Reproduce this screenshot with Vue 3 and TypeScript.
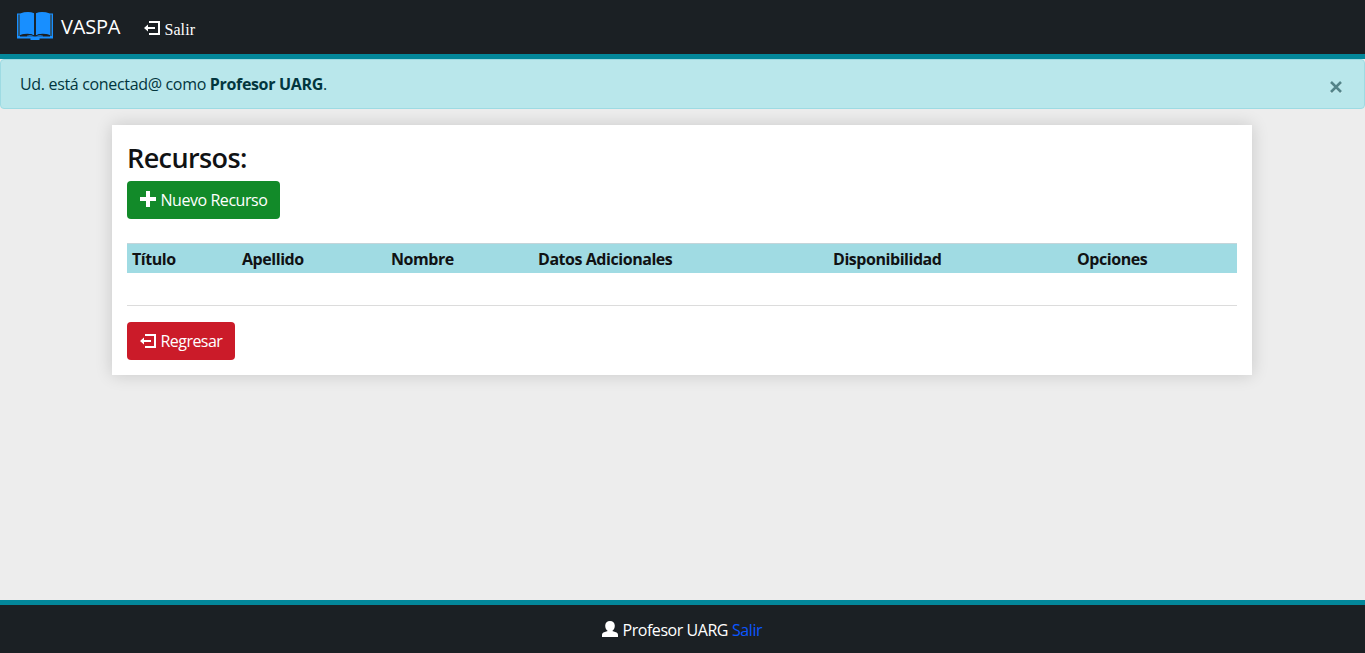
<script setup lang="ts">
interface Column {
  label: string
  width: number
}

const columns: Column[] = [
  { label: 'Título', width: 110 },
  { label: 'Apellido', width: 149 },
  { label: 'Nombre', width: 147 },
  { label: 'Datos Adicionales', width: 295 },
  { label: 'Disponibilidad', width: 244 },
  { label: 'Opciones', width: 165 },
]
const user = 'Profesor UARG'
</script>

<template>
  <div class="page">
    <nav class="navbar">
      <a class="brand">
        <svg class="book" width="36" height="28" viewBox="0 0 36 28">
          <path d="M0 1.5H3V24H33V1.5H36V26.5H22.5V28H13.5V26.5H0Z" fill="#188fff" />
          <path d="M1 2.5H3.2V24H1ZM32.8 2.5H35V24H32.8Z" fill="#28587f" />
          <path d="M3 1.5Q11-1.3 17.2 1.2V23.5Q12 20.8 3 23ZM18.8 1.2Q25-1.3 33 1.5V23Q24 20.8 18.8 23.5Z" fill="#188fff" />
          <path d="M17.3 1H18.7V24H17.3Z" fill="#1b2024" />
          <path d="M3 23.2Q12 20.2 17.3 23.6H18.7Q24 20.2 33 23.2V24.6H3Z" fill="#1b2024" />
          <path d="M10 23.7Q14 22.4 17 24.6H10ZM26 23.7Q22 22.4 19 24.6H26Z" fill="#188fff" />
        </svg>
        <span class="brand-name">VASPA</span>
      </a>
      <a class="nav-exit">
        <svg width="16" height="14" viewBox="0 0 16 14">
          <path d="M5 1H15V13H5" fill="none" stroke="#fff" stroke-width="2" />
          <path d="M0 7L4 3.5V6H11V8H4V10.5Z" fill="#fff" />
        </svg>
        <span>Salir</span>
      </a>
    </nav>

    <div class="alert">
      <span class="alert-text">Ud. está conectad@ como <strong>{{ user }}</strong>.</span>
      <button class="close" aria-label="Cerrar">
        <svg width="12" height="12" viewBox="0 0 12 12">
          <path d="M1 2L11 12M11 2L1 12" stroke="#d5f2f5" stroke-width="2.4" />
          <path d="M1 1L11 11M11 1L1 11" stroke="#538489" stroke-width="2.6" />
        </svg>
      </button>
    </div>

    <main class="card">
      <h1><span>Recursos:</span></h1>
      <button class="btn create">
        <svg width="16" height="16" viewBox="0 0 16 16">
          <path d="M6 0H10V6H16V10H10V16H6V10H0V6H6Z" fill="#fff" />
        </svg>
        <span class="create-label">Nuevo Recurso</span>
      </button>
      <table>
        <colgroup>
          <col v-for="c in columns" :key="c.label" :style="{ width: c.width + 'px' }">
        </colgroup>
        <thead>
          <tr><th v-for="c in columns" :key="c.label">{{ c.label }}</th></tr>
        </thead>
      </table>
      <hr>
      <button class="btn back">
        <svg width="16" height="14" viewBox="0 0 16 14">
          <path d="M5 1H15V13H5" fill="none" stroke="#fff" stroke-width="2" />
          <path d="M0 7L4 3.5V6H11V8H4V10.5Z" fill="#fff" />
        </svg>
        <span class="back-label">Regresar</span>
      </button>
    </main>

    <footer>
      <svg width="16" height="16" viewBox="0 0 16 16">
        <path d="M8 0C10.8 0 12.8 2 12.8 4.8C12.8 7.1 11.6 9.1 10.3 10L14.6 11.4Q16 12 16 13.8V16H0V13.8Q0 12 1.4 11.4L5.7 10C4.4 9.1 3.2 7.1 3.2 4.8C3.2 2 5.2 0 8 0Z" fill="#fff" />
      </svg>
      <span class="footer-user">{{ user }}</span>
      <a class="footer-exit">Salir</a>
    </footer>
  </div>
</template>

<style>
body {
  margin: 0;
  background: #ededed;
}
</style>

<style scoped>
* {
  box-sizing: border-box;
}
.page {
  display: flex;
  flex-direction: column;
  height: 653px;
  overflow: hidden;
  background: #ededed;
  color: #101214;
  font: 16px/24px "Open Sans", "Noto Sans", sans-serif;
  letter-spacing: -0.45px;
  white-space: nowrap;
}
svg {
  flex: none;
}
.navbar {
  display: flex;
  flex: none;
  height: 59px;
  padding-left: 17px;
  background: #1b2024;
  border-bottom: 5px solid #03879a;
  color: #fff;
}
.brand {
  display: flex;
  width: 127.4px;
}
.book {
  margin-top: 12px;
}
.brand-name {
  margin: 12px 0 0 8px;
  font-size: 20px;
  line-height: 30px;
  letter-spacing: -0.2px;
}
.nav-exit {
  display: flex;
  font-family: "Liberation Serif", serif;
  letter-spacing: 0.1px;
}
.nav-exit svg {
  margin-top: 21px;
}
.nav-exit span {
  margin: 18px 0 0 4px;
}
.alert {
  display: flex;
  flex: none;
  justify-content: space-between;
  height: 50px;
  padding: 12px 22.5px 0 19px;
  background: #b9e7eb;
  border: 1px solid #9edbe3;
  border-radius: 4px;
  color: #02363e;
  letter-spacing: -0.33px;
}
.close {
  display: flex;
  height: 12px;
  margin-top: 9px;
  padding: 0;
  background: none;
  border: 0;
}
.close svg {
  overflow: visible;
}
.card {
  flex: none;
  width: 1140px;
  height: 250px;
  margin: 16px 0 0 112px;
  padding: 15px;
  background: #fff;
  box-shadow: 0 0 16px rgba(0, 0, 0, 0.16);
}
h1 {
  height: 34px;
  margin: 0 0 7px;
  font-size: 27px;
  font-weight: 600;
  line-height: 36px;
  letter-spacing: -0.6px;
}
.btn {
  display: flex;
  align-items: center;
  height: 38px;
  padding: 0 0 0 13px;
  border: 0;
  border-radius: 4px;
  color: #fff;
  font: inherit;
  letter-spacing: inherit;
}
.create svg {
  margin-top: -2px;
}
.btn span {
  margin-left: 4.5px;
}
.create {
  width: 153px;
  background: #128a29;
}
.back {
  width: 108px;
  background: #cb1b29;
  letter-spacing: -0.55px;
}
table {
  width: 1110px;
  margin-top: 24px;
  border-collapse: separate;
  border-spacing: 0;
  table-layout: fixed;
}
th {
  height: 30px;
  padding: 3px 5px 0;
  background: #a0dbe3;
  border-top: 1px solid #c4d5da;
  font-weight: 700;
  line-height: 25px;
  text-align: left;
  vertical-align: top;
}
hr {
  height: 1px;
  margin: 32px 0 16px;
  background: #dcdcdc;
  border: 0;
}
footer {
  display: flex;
  flex: none;
  height: 53px;
  margin-top: auto;
  padding-left: 602px;
  background: #1b2024;
  border-top: 5px solid #03879a;
  color: #fff;
}
footer svg {
  margin-top: 16px;
}
.footer-user {
  margin: 13px 0 0 4.5px;
}
.footer-exit {
  margin: 13px 0 0 4px;
  color: #0b56ff;
}
</style>
